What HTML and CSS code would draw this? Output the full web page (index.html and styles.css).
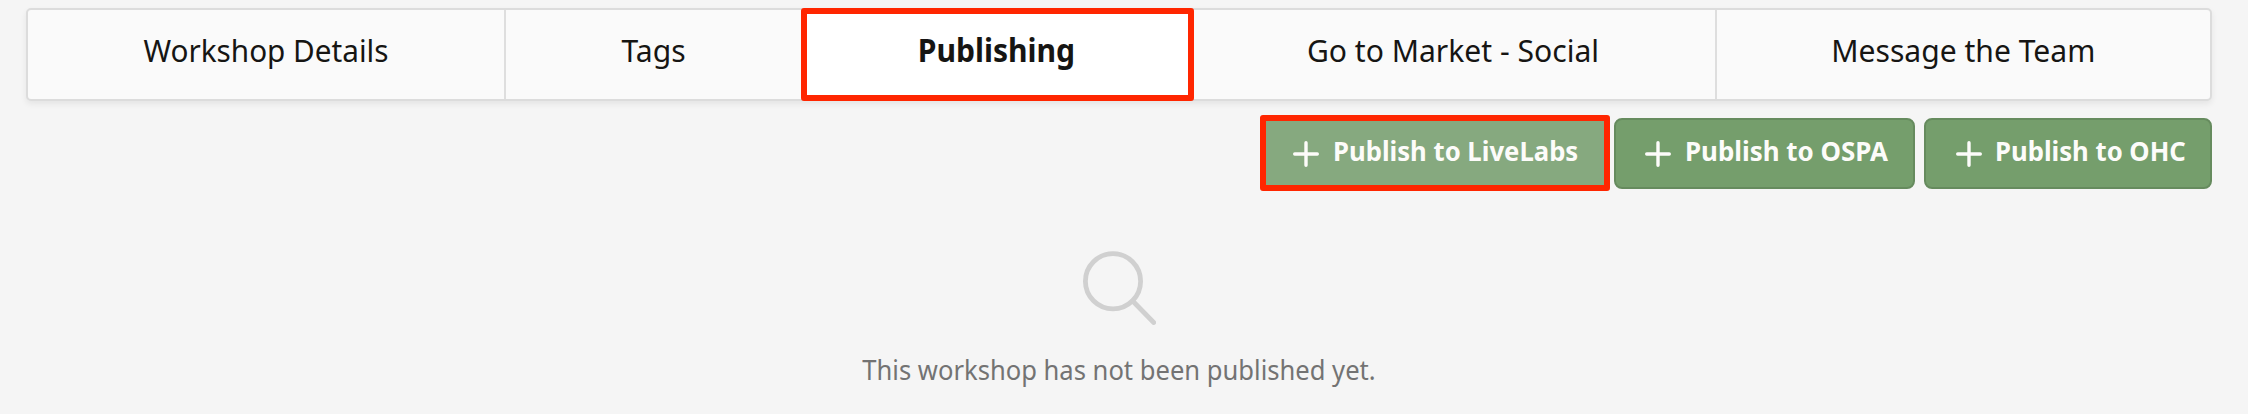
FILE: index.html
```html
<!DOCTYPE html>
<html lang="en">
<head>
<meta charset="utf-8">
<title>Workshop Publishing</title>
<link rel="stylesheet" href="styles.css">
</head>
<body>
<main class="page">
  <nav class="tabs">
    <a class="tab"><span class="t-details">Workshop Details</span></a>
    <a class="tab"><span class="t-tags">Tags</span></a>
    <a class="tab active"><span class="t-publishing">Publishing</span></a>
    <a class="tab"><span class="t-market">Go to Market - Social</span></a>
    <a class="tab"><span class="t-message">Message the Team</span></a>
  </nav>
  <div class="actions">
    <button class="btn livelabs"><svg class="plus" viewBox="0 0 26 26"><path d="M13 1.7v22.6M1.7 13h22.6"/></svg><span>Publish to LiveLabs</span></button>
    <button class="btn ospa"><svg class="plus" viewBox="0 0 26 26"><path d="M13 1.7v22.6M1.7 13h22.6"/></svg><span>Publish to OSPA</span></button>
    <button class="btn ohc"><svg class="plus" viewBox="0 0 26 26"><path d="M13 1.7v22.6M1.7 13h22.6"/></svg><span>Publish to OHC</span></button>
  </div>
  <section class="empty">
    <svg class="search" viewBox="0 0 74 74"><circle cx="31" cy="30.3" r="27.6"/><path d="M50.7 50L71.7 71.5"/></svg>
    <p>This workshop has not been published yet.</p>
  </section>
</main>
</body>
</html>
```
FILE: styles.css
```css
* { box-sizing: border-box; }
body { margin: 0; background: #f5f5f5; font-family: "Noto Sans", sans-serif; color: #161513; }
.page { width: 2248px; height: 414px; overflow: hidden; padding: 8px 36px 0 26px; background: #f5f5f5; }
.tabs { display: grid; grid-template-columns: 478px 295px 393px 523px 1fr; height: 93px; border: 2px solid #dcdcdc; border-radius: 5px; background: #fafafa; box-shadow: 0 3px 6px rgba(0,0,0,.07); }
.tab { display: flex; justify-content: center; height: 89px; padding-top: 18px; border-right: 2px solid #dedede; font-size: 31.5px; line-height: 44px; white-space: nowrap; }
.tab span { transform: scaleX(.955); }
.tab .t-details { transform: scaleX(.943); }
.tab:nth-child(2), .tab:last-child { border-right: 0; }
.tab:nth-child(4) { padding-right: 3px; }
.tab.active { height: 93px; margin-top: -2px; padding-top: 14px; padding-right: 2px; border: 6px solid #ff2600; border-radius: 3px; background: #fff; font-weight: 700; }
.actions { display: flex; align-items: flex-start; justify-content: flex-end; height: 75px; margin-top: 14px; }
.btn { display: flex; align-items: center; height: 71px; margin: 3px 0 0 9px; padding: 0 0 5px 30px; border: 2px solid #668b5e; border-radius: 8px; background: #759e6c; color: #fdfcfa; font: 700 27.5px/38px "Noto Sans", sans-serif; white-space: nowrap; }
.btn.livelabs { width: 350px; height: 76px; margin: 0; padding-left: 27px; border: 6px solid #ff2600; border-radius: 3px; background: #86a97f; }
.btn.ospa { width: 301px; margin-left: 4px; padding-left: 29px; }
.btn.ohc { width: 288px; }
.btn span { transform: scaleX(.934); transform-origin: left; }
.btn.ospa span { transform: scaleX(.942); }
.plus { flex: none; width: 26px; height: 26px; margin: 6px 14px 0 0; fill: none; stroke: #fdfcfa; stroke-width: 3.4; stroke-linecap: round; }
.ohc .plus { margin-right: 13px; }
.empty { display: flex; flex-direction: column; align-items: center; margin-top: 61px; }
.search { width: 74px; height: 74px; fill: none; stroke: #d0d0d0; stroke-width: 4.8; stroke-linecap: round; }
.empty p { margin: 25px 0 0; color: #737373; font-size: 27.5px; line-height: 40px; white-space: nowrap; transform: scaleX(.93); }
```
